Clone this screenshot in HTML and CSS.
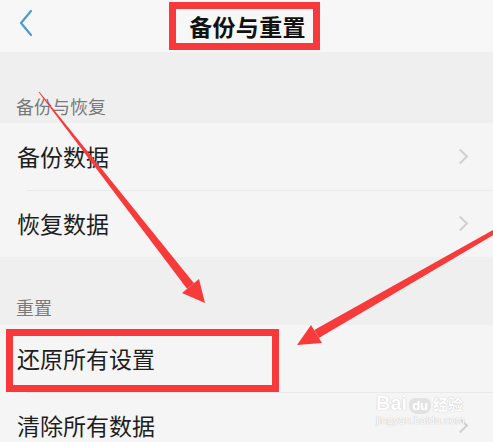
FILE: index.html
```html
<!DOCTYPE html>
<html lang="zh">
<head>
<meta charset="utf-8">
<link rel="stylesheet" href="styles.css">
</head>
<body>
<div class="page">
  <header class="topbar">
    <svg class="back" width="20" height="30" viewBox="0 0 20 30"><path d="M13 3 L3 15 L13 27" fill="none" stroke="#4d9bd4" stroke-width="2.2" stroke-linecap="round" stroke-linejoin="round"/></svg>
    <h1 class="title">备份与重置</h1>
  </header>
  <div class="band band-first"><span class="label">备份与恢复</span></div>
  <div class="item"><span class="text">备份数据</span><span class="chev"></span></div>
  <div class="item item-sep"><span class="text">恢复数据</span><span class="chev"></span></div>
  <div class="band"><span class="label">重置</span></div>
  <div class="item"><span class="text">还原所有设置</span></div>
  <div class="item item-sep"><span class="text">清除所有数据</span><span class="chev"></span></div>

  <div class="mark mark-title"></div>
  <div class="mark mark-item"></div>
  <svg class="arrows" width="493" height="442" viewBox="0 0 493 442">
    <polygon fill="#f73a3a" points="38.6,92.3 39.4,91.7 194,283.2 187,288.8"/>
    <polygon fill="#f73a3a" points="182,293 205,303 199,279"/>
    <polygon fill="#f73a3a" points="318.75,337.9 314.25,330.1 495,229 497,233"/>
    <polygon fill="#f73a3a" points="311,325 297,345 322,343"/>
  </svg>
  <div class="wm">
    <div class="wm-top"><span class="wm-bai">Bai</span><span class="wm-du">du</span><span class="wm-jy">经验</span></div>
    <div class="wm-url">jingyan.baidu.com</div>
  </div>
</div>
</body>
</html>
```
FILE: styles.css
```css
html, body {
  margin: 0;
  padding: 0;
}
body {
  width: 493px;
  height: 442px;
  overflow: hidden;
  background: #f5f5f5;
  font-family: "Noto Sans CJK SC", "Noto Sans", sans-serif;
}
.page {
  position: relative;
  width: 493px;
  height: 442px;
  overflow: hidden;
}
.topbar {
  height: 52px;
  background: #f7f7f7;
  display: flex;
  align-items: center;
  justify-content: center;
  position: relative;
}
.back {
  position: absolute;
  left: 18px;
  top: 8px;
}
.title {
  margin: 0;
  font-size: 23px;
  font-weight: 700;
  color: #111;
  letter-spacing: 0.3px;
  line-height: 1;
  padding-left: 2px;
}
.band {
  height: 68px;
  background: #efefef;
  display: flex;
  align-items: flex-end;
  padding-left: 16px;
  box-sizing: border-box;
  padding-bottom: 6px;
}
.band-first {
  height: 71px;
  padding-bottom: 5px;
}
.label {
  font-size: 18px;
  color: #7a7a7a;
  line-height: 24px;
}
.item {
  height: 67px;
  background: #f5f5f5;
  display: flex;
  align-items: center;
  padding-left: 17px;
  padding-right: 27px;
  position: relative;
}
.item-sep::before {
  content: "";
  position: absolute;
  left: 27px;
  right: 0;
  top: 0;
  height: 1px;
  background: #e9e9e9;
}
.text {
  flex: 1;
  font-size: 23px;
  color: #1e1e1e;
  line-height: 1;
}
.chev {
  width: 9px;
  height: 9px;
  border-top: 2px solid #d0d0d0;
  border-right: 2px solid #d0d0d0;
  transform: rotate(45deg);
}
.mark {
  position: absolute;
  border: 7px solid #f7393b;
  box-sizing: border-box;
}
.mark-title {
  left: 169px;
  top: 2px;
  width: 151px;
  height: 48px;
}
.mark-item {
  left: 6px;
  top: 329px;
  width: 273px;
  height: 63px;
}
.arrows {
  position: absolute;
  left: 0;
  top: 0;
}
.wm {
  position: absolute;
  left: 376px;
  top: 392px;
  color: #ffffff;
  font-family: "Liberation Sans", sans-serif;
}
.wm-top {
  display: flex;
  align-items: flex-end;
  gap: 2px;
}
.wm-bai {
  font-size: 20px;
  font-weight: 700;
  line-height: 22px;
  text-shadow: 0 0 1px #c8c8c8, 0 0 1px #c8c8c8;
}
.wm-du {
  font-size: 13px;
  font-weight: 700;
  line-height: 16px;
  background: #e2e2e2;
  color: #fff;
  border-radius: 6px 6px 8px 8px;
  padding: 0 3px;
}
.wm-jy {
  font-family: "Noto Sans CJK SC", sans-serif;
  font-size: 15px;
  font-weight: 700;
  line-height: 20px;
  text-shadow: 0 0 1px #c8c8c8, 0 0 1px #c8c8c8;
}
.wm-url {
  font-size: 11px;
  line-height: 13px;
  color: #fff;
  text-shadow: 0 0 1px #c4c4c4, 0 0 1px #c4c4c4;
}
```
